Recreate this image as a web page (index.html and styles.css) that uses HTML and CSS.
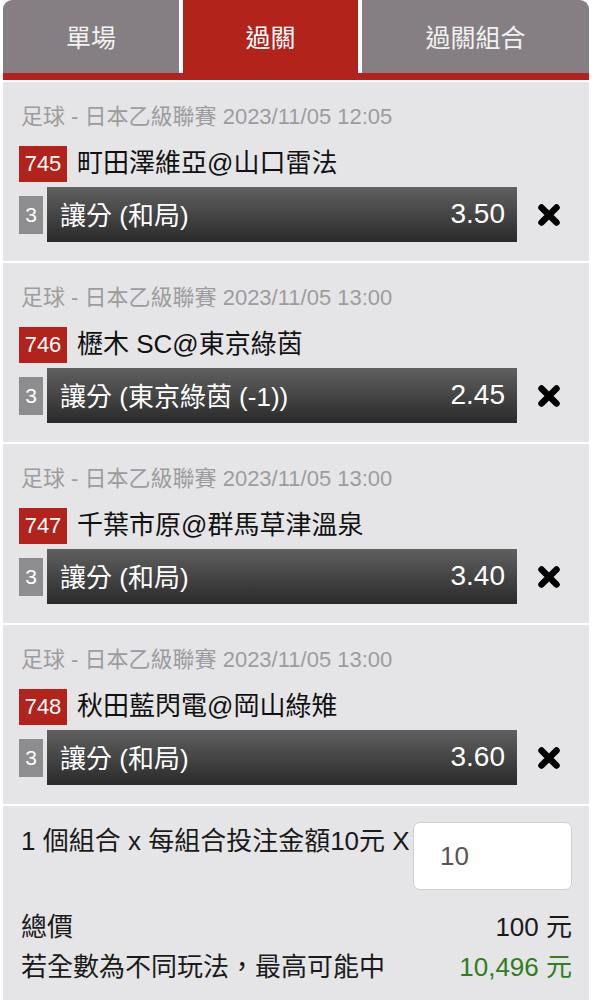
FILE: index.html
```html
<!DOCTYPE html>
<html lang="zh-Hant">
<head>
<meta charset="utf-8">
<link rel="stylesheet" href="styles.css">
</head>
<body>
<div class="page">
  <nav class="tabs">
    <div class="tab first">單場</div>
    <div class="tab active">過關</div>
    <div class="tab last">過關組合</div>
  </nav>
  <div class="underline"></div>

  <div class="card">
    <div class="league">足球 - 日本乙級聯賽 2023/11/05 12:05</div>
    <div class="match"><span class="badge">745</span><span class="teams">町田澤維亞@山口雷法</span></div>
    <div class="betrow">
      <span class="num">3</span>
      <div class="bar"><span class="pick">讓分 (和局)</span><span class="odds">3.50</span></div>
      <svg class="close" viewBox="0 0 24 24"><path d="M4.5 4.5 L19.5 19.5 M19.5 4.5 L4.5 19.5"/></svg>
    </div>
  </div>

  <div class="card">
    <div class="league">足球 - 日本乙級聯賽 2023/11/05 13:00</div>
    <div class="match"><span class="badge">746</span><span class="teams">櫪木 SC@東京綠茵</span></div>
    <div class="betrow">
      <span class="num">3</span>
      <div class="bar"><span class="pick">讓分 (東京綠茵 (-1))</span><span class="odds">2.45</span></div>
      <svg class="close" viewBox="0 0 24 24"><path d="M4.5 4.5 L19.5 19.5 M19.5 4.5 L4.5 19.5"/></svg>
    </div>
  </div>

  <div class="card">
    <div class="league">足球 - 日本乙級聯賽 2023/11/05 13:00</div>
    <div class="match"><span class="badge">747</span><span class="teams">千葉市原@群馬草津溫泉</span></div>
    <div class="betrow">
      <span class="num">3</span>
      <div class="bar"><span class="pick">讓分 (和局)</span><span class="odds">3.40</span></div>
      <svg class="close" viewBox="0 0 24 24"><path d="M4.5 4.5 L19.5 19.5 M19.5 4.5 L4.5 19.5"/></svg>
    </div>
  </div>

  <div class="card">
    <div class="league">足球 - 日本乙級聯賽 2023/11/05 13:00</div>
    <div class="match"><span class="badge">748</span><span class="teams">秋田藍閃電@岡山綠雉</span></div>
    <div class="betrow">
      <span class="num">3</span>
      <div class="bar"><span class="pick">讓分 (和局)</span><span class="odds">3.60</span></div>
      <svg class="close" viewBox="0 0 24 24"><path d="M4.5 4.5 L19.5 19.5 M19.5 4.5 L4.5 19.5"/></svg>
    </div>
  </div>

  <div class="summary">
    <div class="stake">
      <span class="stake-text">1 個組合 x 每組合投注金額10元 X</span>
      <div class="input">10</div>
    </div>
    <div class="line"><span>總價</span><span>100 元</span></div>
    <div class="line"><span>若全數為不同玩法，最高可能中</span><span class="green">10,496 元</span></div>
  </div>
</div>
</body>
</html>
```

FILE: styles.css
```css
* { box-sizing: border-box; }
html, body { margin: 0; padding: 0; background: #ffffff; }
body {
  font-family: "Liberation Sans", "Noto Sans CJK TC", sans-serif;
  color: #1a1a1a;
}
.page {
  width: 586px;
  margin-left: 3px;
  background: #e5e5e7;
  min-height: 1000px;
}
.tabs {
  display: grid;
  grid-template-columns: 176px 175px 1fr;
  gap: 4px;
  height: 73px;
  background: #ffffff;
}
.tab {
  background: #857f83;
  color: #f2f2f2;
  font-size: 25px;
  display: flex;
  align-items: center;
  justify-content: center;
  padding-bottom: 2px;
}
.tab.first { border-top-left-radius: 9px; }
.tab.last { border-top-right-radius: 9px; }
.tab.active { background: #b2231b; color: #ffffff; }
.underline {
  height: 7px;
  background: #b2231b;
  border-bottom: 2px solid #ffffff;
  box-sizing: content-box;
}
.card {
  padding: 24px 0 19px 18px;
  border-bottom: 2px solid #ffffff;
}
.league {
  height: 22px;
  line-height: 22px;
  font-size: 22px;
  color: #9c9c9e;
  white-space: nowrap;
}
.match {
  margin-top: 18px;
  height: 36px;
  display: flex;
  align-items: center;
}
.badge {
  width: 48px;
  height: 36px;
  margin-left: -2px;
  background: #b2231b;
  color: #ffffff;
  font-size: 22px;
  display: flex;
  align-items: center;
  justify-content: center;
}
.teams {
  margin-left: 10px;
  margin-bottom: 8px;
  font-size: 26px;
  color: #111111;
  white-space: nowrap;
}
.betrow {
  margin-top: 5px;
  height: 55px;
  display: flex;
  align-items: center;
}
.num {
  width: 24px;
  height: 38px;
  margin-left: -2px;
  background: #8d8d8f;
  color: #ffffff;
  font-size: 21px;
  display: flex;
  align-items: center;
  justify-content: center;
}
.bar {
  margin-left: 4px;
  width: 470px;
  height: 55px;
  background: linear-gradient(#606060, #2a2a2a);
  color: #ffffff;
  display: flex;
  align-items: center;
  justify-content: space-between;
  padding: 0 12px 2px 13px;
  font-size: 26px;
}
.odds { font-size: 28px; }
.close {
  width: 24px;
  height: 24px;
  margin-left: 20px;
}
.close path {
  stroke: #000000;
  stroke-width: 6.5;
  stroke-linecap: round;
  fill: none;
}
.summary {
  padding: 16px 17px 13px 18px;
}
.stake {
  display: flex;
  justify-content: space-between;
  align-items: flex-start;
}
.stake-text {
  font-size: 26px;
  line-height: 30px;
  margin-top: 4px;
  white-space: nowrap;
}
.input {
  width: 159px;
  height: 68px;
  background: #ffffff;
  border: 1px solid #cfcfd3;
  border-radius: 7px;
  font-size: 26px;
  color: #555555;
  display: flex;
  align-items: center;
  padding-left: 26px;
}
.line {
  display: flex;
  justify-content: space-between;
  font-size: 26px;
  line-height: 40px;
}
.stake + .line { margin-top: 17px; }
.green { color: #2f7d1f; }
```
